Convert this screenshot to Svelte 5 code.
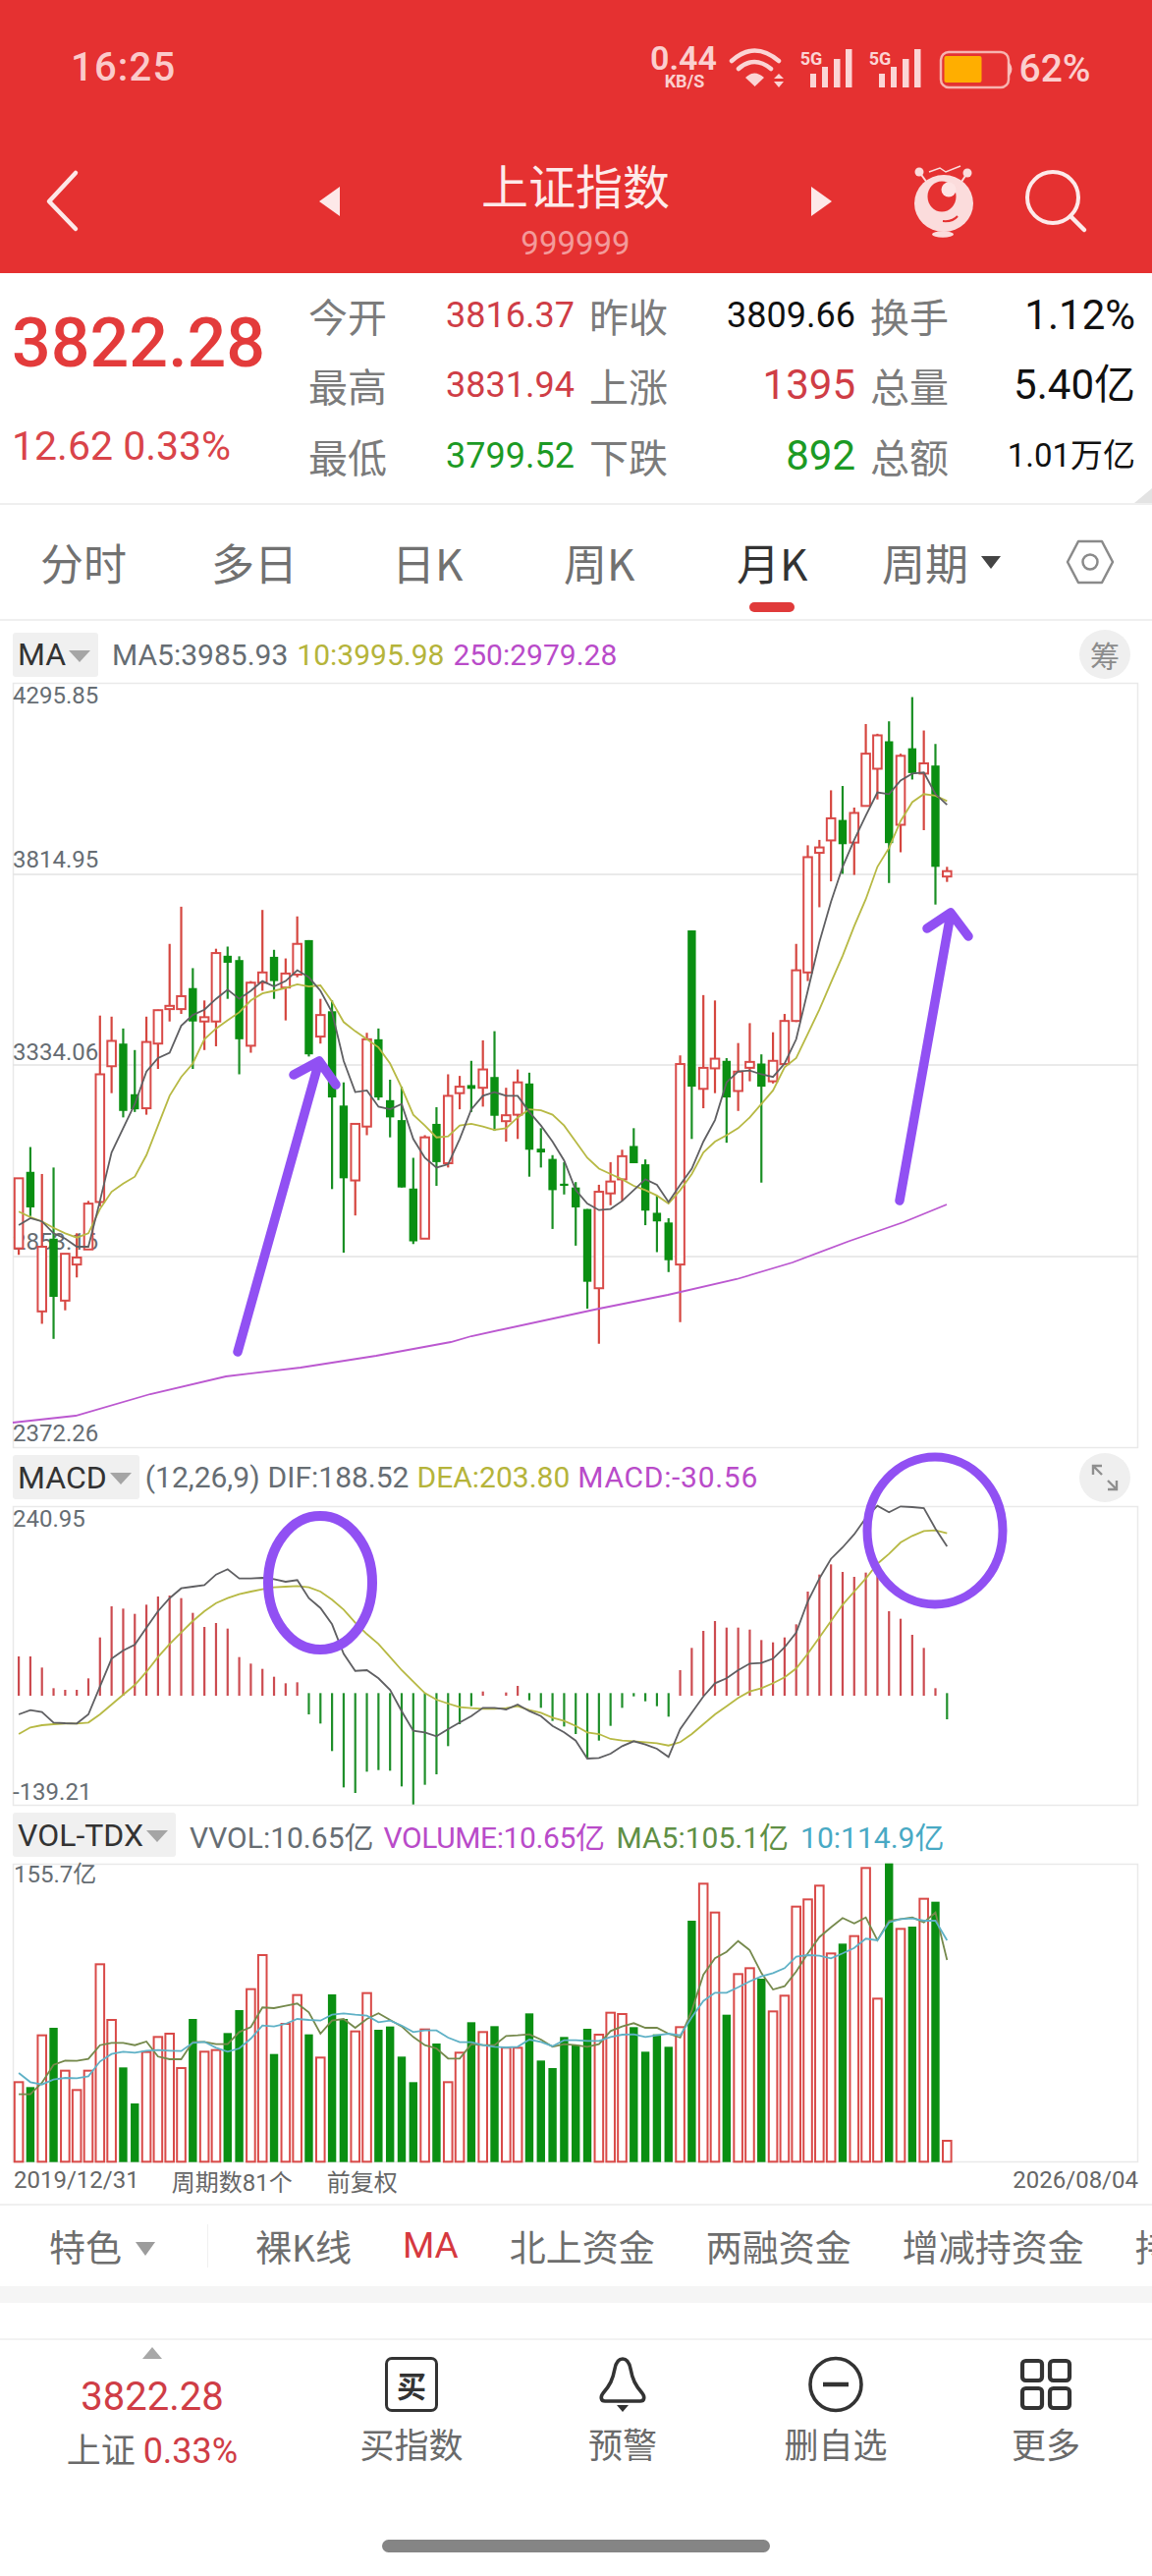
<script>
  const X = (i) => 19.1 + 11.815 * i;
  const PY = (z) => 630 + z * 0.5485;
  const MY = (z) => 1470 + z / 3;
  const VY = (z) => 1840 + z / 3;

  // [up?, high, bodyTop, bodyBottom, low] in reference-sampled units
  const candles = [
    [1,1038,1038,1168,1180],[0,980,1026,1092,1108],[1,1030,1165,1285,1308],[0,1018,1150,1258,1336],[1,1178,1178,1265,1283],
    [1,1140,1185,1198,1222],[1,1080,1085,1170,1170],[1,736,845,1082,1090],[1,738,783,830,880],[0,760,788,913,925],
    [0,800,882,910,915],[1,738,785,908,920],[1,725,726,788,835],[1,603,718,724,747],[1,534,700,724,733],
    [0,648,685,747,835],[1,708,739,747,800],[1,612,620,747,793],[0,608,625,638,705],[0,626,633,780,845],
    [1,672,675,792,805],[1,540,656,675,690],[0,614,627,672,705],[1,630,658,684,745],[1,552,603,660,665],
    [0,596,596,808,812],[1,705,735,775,788],[0,708,728,888,1058],[0,860,903,1038,1176],[1,937,937,1042,1107],
    [1,768,780,942,958],[0,760,780,888,893],[0,855,893,925,962],[0,868,930,1055,1055],[0,1000,1057,1155,1160],
    [1,958,962,1150,1150],[0,906,937,1008,1052],[1,845,885,1010,1018],[1,848,868,880,910],[0,820,865,872,915],
    [1,782,836,870,905],[0,765,850,922,950],[1,870,921,932,970],[1,836,860,920,965],[0,842,862,985,1035],
    [0,945,983,990,1018],[0,995,1002,1060,1132],[0,1008,1048,1052,1068],[0,1045,1055,1092,1163],[0,1095,1095,1230,1280],
    [1,1050,1063,1242,1345],[1,1008,1044,1066,1088],[1,985,997,1040,1080],[0,945,978,1010,1010],[0,1003,1012,1098,1125],
    [0,1070,1102,1118,1175],[0,1112,1120,1190,1212],[1,810,826,1198,1305],[0,578,578,868,965],[1,698,833,872,908],
    [1,708,816,834,880],[0,815,820,888,972],[1,787,840,876,913],[1,750,822,833,858],[0,808,825,868,1046],
    [1,767,820,858,862],[1,733,746,826,826],[1,603,652,746,748],[1,420,442,656,672],[1,410,424,434,535],
    [1,318,370,411,487],[0,310,373,418,473],[1,350,360,415,475],[1,195,250,347,348],[1,213,216,278,335],
    [0,190,227,416,490],[1,250,254,382,433],[0,145,240,286,298],[1,207,268,287,392],[0,232,272,460,530],
    [1,460,468,478,488]
  ];
  const ma5 = [1125,1112,1118,1140,1150,1165,1165,1080,990,945,900,840,815,805,755,735,725,705,688,705,690,672,682,672,652,665,690,730,820,878,875,905,910,900,965,1000,1018,1012,965,910,885,878,885,885,915,940,970,1005,1060,1085,1097,1095,1080,1060,1040,1050,1082,1050,1020,970,930,860,840,838,845,850,825,780,690,600,525,460,410,365,322,325,300,287,285,325,345];
  const ma10 = [1100,1110,1118,1130,1140,1148,1140,1095,1063,1048,1035,995,940,885,850,825,780,760,745,730,708,695,690,685,678,682,680,710,748,765,780,795,825,870,920,940,962,960,940,937,942,948,945,925,910,912,920,940,970,1000,1020,1030,1040,1052,1060,1070,1085,1060,1030,990,970,958,945,925,900,875,832,815,770,725,675,625,570,520,460,425,375,340,325,328,338];
  const ma250 = [[13,1448],[77,1441],[153,1419],[230,1401],[306,1392],[383,1380],[459,1366],[480,1360],[610,1332],[680,1318],[750,1302],[807,1285],[864,1263.5],[920,1244],[964,1226]];

  // MACD: signed bars; tops for red, bottoms for green
  const macdBars = [648,648,682,745,750,750,715,590,495,502,518,490,465,462,470,515,558,546,563,650,670,686,710,730,727,
    -825,-853,-937,-1048,-1065,-1000,-995,-997,-1045,-1100,-1040,-1008,-922,-855,-800,755,0,758,738,-782,-805,-845,-862,-885,-960,-905,-860,-805,-770,-785,-800,-832,
    690,622,570,540,560,560,566,598,605,590,550,450,398,367,390,405,392,395,510,533,582,622,745,-840];
  const dif = [825,812,818,850,852,853,825,740,655,630,612,560,510,470,440,435,430,398,382,410,410,408,412,420,415,470,500,550,640,692,690,715,750,815,875,880,892,870,850,830,805,805,810,795,815,830,860,880,905,960,958,945,922,907,917,930,955,870,820,770,730,715,690,670,668,655,620,575,480,410,350,315,275,225,188,208,190,192,195,258,312];
  const dea = [885,865,858,855,853,853,850,825,795,765,735,695,650,610,575,540,510,485,470,458,450,443,437,435,433,437,450,475,505,545,580,610,650,690,725,760,780,792,803,806,808,808,806,800,812,820,835,845,860,880,885,900,905,907,910,913,920,910,885,855,825,800,775,755,745,730,712,685,640,590,540,490,450,410,365,335,300,280,265,263,272];

  const vols = [[1,838],[0,853],[1,695],[0,672],[1,803],[1,862],[1,803],[1,478],[1,648],[0,793],[0,903],[1,746],[1,700],[1,690],[1,795],[0,645],[1,745],[1,740],[0,688],[0,618],[1,554],[1,450],[0,752],[1,660],[1,572],[0,692],[1,763],[0,570],[0,645],[1,683],[1,566],[0,678],[0,668],[0,760],[0,838],[1,677],[0,720],[1,838],[1,748],[0,655],[1,685],[0,667],[1,733],[1,733],[0,628],[0,772],[0,795],[0,700],[0,725],[0,675],[1,693],[1,626],[1,630],[0,670],[0,745],[0,692],[0,730],[1,670],[0,345],[1,232],[1,320],[0,632],[1,508],[1,490],[0,522],[1,622],[1,574],[1,302],[1,280],[1,238],[1,445],[0,415],[1,392],[1,184],[1,583],[0,170],[1,370],[0,363],[1,278],[0,287],[1,1017]];
  const vma5 = [875,875,840,785,772,773,767,725,718,718,725,714,760,768,768,715,715,722,722,685,670,610,612,605,598,625,690,650,645,672,645,628,648,668,700,725,735,766,766,722,725,725,697,695,692,708,730,722,725,730,722,682,668,658,672,672,690,702,620,510,460,440,407,435,505,555,545,500,445,395,365,337,353,335,405,345,340,335,350,320,465];
  const vma10 = [810,838,845,830,825,826,820,775,752,745,748,742,740,742,743,718,715,733,745,735,705,665,668,660,645,648,650,632,628,632,635,655,650,665,685,680,680,702,716,716,725,730,732,730,708,715,728,710,710,712,712,700,693,692,700,695,690,695,640,590,565,565,548,530,515,505,490,455,450,452,460,445,428,400,405,350,340,338,345,345,405];

  const line = (arr, f) => arr.map((z, i) => `${X(i).toFixed(1)},${f(z).toFixed(1)}`).join(' ');
  const ptsMa5 = line(ma5, PY), ptsMa10 = line(ma10, PY);
  const ptsMa250 = ma250.map((p) => p.join(',')).join(' ');
  const ptsDif = line(dif, MY), ptsDea = line(dea, MY);
  const ptsV5 = line(vma5, VY), ptsV10 = line(vma10, VY);

  const quote = [
    ['今开','3816.37','up','昨收','3809.66','','换手','1.12%','big'],
    ['最高','3831.94','up','上涨','1395','up big','总量','5.40亿','big'],
    ['最低','3799.52','down','下跌','892','down big','总额','1.01万亿','small']
  ];
  const tabs = ['分时','多日','日K','周K','月K'];
  const features = ['裸K线','MA','北上资金','两融资金','增减持资金','持股'];
</script>

<div class="page">
  <header class="head">
    <div class="status">
      <span class="time">16:25</span>
      <svg class="sicons" viewBox="655 40 470 60" width="470" height="60">
        <text x="696" y="71" class="sp1" text-anchor="middle">0.44</text>
        <text x="697" y="89" class="sp2" text-anchor="middle">KB/S</text>
        <g fill="none" stroke="#fbd5d5" stroke-width="4.5" stroke-linecap="round">
          <path d="M745 62 Q768 41 793 62" />
          <path d="M752 70 Q768 56 785 70" />
        </g>
        <path d="M759 79 Q768 70 778 79 L768.6 88 Z" fill="#fbd5d5" />
        <path d="M793 75 l5 5 h-10 Z M793 89 l5 -6 h-10 Z" fill="#fbd5d5" />
        <text x="826" y="66" class="sg" text-anchor="middle">5G</text>
        <g fill="#fbd5d5">
          <rect x="825" y="75" width="6" height="14" /><rect x="837" y="68" width="6" height="21" /><rect x="849" y="60" width="6.5" height="29" /><rect x="861" y="50" width="6.5" height="39" />
        </g>
        <text x="896" y="66" class="sg" text-anchor="middle">5G</text>
        <g fill="#fbd5d5">
          <rect x="895" y="75" width="6" height="14" /><rect x="907" y="68" width="6" height="21" /><rect x="919" y="60" width="6.5" height="29" /><rect x="931" y="50" width="6.5" height="39" />
        </g>
        <rect x="958" y="53" width="69" height="36" rx="8" fill="none" stroke="#f7b4b0" stroke-width="2.5" />
        <rect x="961.5" y="57" width="38" height="27" rx="2" fill="#ffae00" />
        <path d="M1027.5 65 q4 5 0 11 Z" fill="#f7c0bc" stroke="#f7c0bc" stroke-width="2" />
        <text x="1074" y="83" class="sp3" text-anchor="middle">62%</text>
      </svg>
    </div>
    <nav class="bar">
      <svg class="back" viewBox="0 0 40 70" width="40" height="70"><path d="M31 6 L4 35 L31 63" fill="none" stroke="#fde8e8" stroke-width="4.5" stroke-linecap="round" stroke-linejoin="round"/></svg>
      <svg class="tri t1" viewBox="0 0 21 30" width="21" height="30"><path d="M21 0 V30 L0 15 Z" fill="#fde8e8" /></svg>
      <div class="title">
        <strong>上证指数</strong>
        <span>999999</span>
      </div>
      <svg class="tri" viewBox="0 0 21 30" width="21" height="30"><path d="M0 0 V30 L21 15 Z" fill="#fde8e8" /></svg>
      <svg class="logo" viewBox="925 165 68 80" width="68" height="80">
        <g stroke="#fbdcdc" stroke-width="2" fill="none">
          <path d="M934 175 L942 186 M983 176 L977 185" />
          <path d="M944 175 L955 171 L961 175 L976 169" stroke-width="1.5" />
        </g>
        <circle cx="934" cy="175" r="4.5" fill="#fbdcdc" /><circle cx="983" cy="176" r="4.5" fill="#fbdcdc" />
        <ellipse cx="959" cy="207" rx="30" ry="29" fill="#fbdcdc" />
        <ellipse cx="957" cy="200" rx="14.5" ry="15.5" fill="#e53131" />
        <circle cx="964" cy="193" r="7.5" fill="#fde4e4" />
        <path d="M958 225 q10 1 15 -5" fill="none" stroke="#e53131" stroke-width="2" />
        <ellipse cx="958" cy="238.5" rx="11" ry="3.2" fill="#fbdcdc" />
      </svg>
      <svg class="search" viewBox="1038 170 70 70" width="70" height="70"><circle cx="1070" cy="201" r="26" fill="none" stroke="#fdeaea" stroke-width="4" /><path d="M1088 220 L1102 234" stroke="#fdeaea" stroke-width="4.5" stroke-linecap="round" /></svg>
    </nav>
  </header>

  <section class="quote">
    <div class="last">
      <div class="price">3822.28</div>
      <div class="chg">12.62 0.33%</div>
    </div>
    <div class="qgrid">
      {#each quote as r}
        <span class="ql">{r[0]}</span><span class="qv {r[2]}">{r[1]}</span>
        <span class="ql">{r[3]}</span><span class="qv {r[5]}">{r[4]}</span>
        <span class="ql">{r[6]}</span><span class="qv {r[8]}">{r[7]}</span>
      {/each}
    </div>
    <i class="corner"></i>
  </section>

  <div class="tabs">
    {#each tabs as t, i}
      <div class="tab" class:on={i === 4}>{t}{#if i === 4}<i></i>{/if}</div>
    {/each}
    <div class="tab">周期<b class="caret"></b></div>
    <svg class="hex" viewBox="0 0 50 46" width="50" height="46"><path d="M13 2 H37 L48 23 L37 44 H13 L2 23 Z" fill="none" stroke="#8a8a8a" stroke-width="2.5" stroke-linejoin="round"/><circle cx="25" cy="23" r="7.5" fill="none" stroke="#8a8a8a" stroke-width="2.5"/></svg>
  </div>

  <div class="ihead h1">
    <div class="chip">MA<b></b></div>
    <span class="grey">MA5:3985.93</span><span class="olive">10:3995.98</span><span class="purple">250:2979.28</span>
    <div class="round">筹</div>
  </div>
  <svg class="chart c1" viewBox="0 695 1173 779" width="1173" height="779">
    <rect x="13.5" y="695.5" width="1145" height="778" class="frame" />
    <path d="M13 890 H1159 M13 1084 H1159 M13 1279 H1159" class="grid" />
    <text x="13" y="716" class="ax">4295.85</text>
    <text x="13" y="883" class="ax">3814.95</text>
    <text x="13" y="1079" class="ax">3334.06</text>
    <text x="13" y="1272" class="ax">2853.16</text>
    <text x="13" y="1467" class="ax">2372.26</text>
    {#each candles as c, i}
      {@const x = X(i)}
      <line x1={x} x2={x} y1={PY(c[1])} y2={PY(c[4])} class={c[0] ? 'wr' : 'wg'} />
      {#if c[0]}
        <rect x={x - 4.3} y={PY(c[2])} width="8.6" height={Math.max(PY(c[3]) - PY(c[2]), 2)} class="br" />
      {:else}
        <rect x={x - 4.2} y={PY(c[2])} width="8.4" height={Math.max(PY(c[3]) - PY(c[2]), 2)} class="bg" />
      {/if}
    {/each}
    <polyline points={ptsMa250} class="l lp" />
    <polyline points={ptsMa10} class="l lo" />
    <polyline points={ptsMa5} class="l ld" />
  </svg>

  <div class="ihead h2">
    <div class="chip">MACD<b></b></div>
    <span class="grey">(12,26,9)</span><span class="grey">DIF:188.52</span><span class="olive">DEA:203.80</span><span class="purple">MACD:-30.56</span>
    <div class="round">
      <svg viewBox="0 0 30 30" width="30" height="30"><path d="M3 12 V3 H12 M3 3 L12 12 M27 18 V27 H18 M27 27 L18 18" fill="none" stroke="#8f8f8f" stroke-width="2.4"/></svg>
    </div>
  </div>
  <svg class="chart c2" viewBox="0 1533 1173 305" width="1173" height="305">
    <rect x="13.5" y="1533.5" width="1145" height="304" class="frame" />
    <text x="13" y="1554" class="ax">240.95</text>
    <text x="13" y="1832" class="ax">-139.21</text>
    {#each macdBars as v, i}
      {#if v > 0}
        <line x1={X(i)} x2={X(i)} y1={MY(v)} y2={MY(768)} class="hr" />
      {:else if v < 0}
        <line x1={X(i)} x2={X(i)} y1={MY(760)} y2={MY(-v)} class="hg" />
      {/if}
    {/each}
    <polyline points={ptsDea} class="l lo" />
    <polyline points={ptsDif} class="l ld" />
  </svg>

  <div class="ihead h3">
    <div class="chip">VOL-TDX<b></b></div>
    <span class="grey">VVOL:10.65亿</span><span class="purple">VOLUME:10.65亿</span><span class="mgreen">MA5:105.1亿</span><span class="cyan">10:114.9亿</span>
  </div>
  <svg class="chart c3" viewBox="0 1897 1173 304" width="1173" height="304">
    <rect x="13.5" y="1897.5" width="1145" height="303" class="frame" />
    <text x="14" y="1916" class="ax">155.7亿</text>
    {#each vols as v, i}
      {#if v[0]}
        <rect x={X(i) - 4.3} y={VY(v[1])} width="8.6" height={VY(1081) - VY(v[1])} class="br" />
      {:else}
        <rect x={X(i) - 4.2} y={VY(v[1])} width="8.4" height={VY(1082) - VY(v[1])} class="bg" />
      {/if}
    {/each}
    <polyline points={ptsV5} class="l lv5" />
    <polyline points={ptsV10} class="l lv10" />
  </svg>
  <div class="foot">
    <span>2019/12/31</span><span class="f2">周期数81个</span><span class="f3">前复权</span><span class="f4">2026/08/04</span>
  </div>

  <div class="features">
    <span class="fsel">特色<b></b></span>
    <i class="sep"></i>
    {#each features as f}
      <span class:act={f === 'MA'}>{f}</span>
    {/each}
  </div>
  <div class="band"></div>

  <div class="bottom">
    <div class="cell idx">
      <i class="uptri"></i>
      <div class="bp">3822.28</div>
      <div class="bn">上证 <em>0.33%</em></div>
    </div>
    <div class="cell">
      <div class="ico"><div class="buy">买</div></div>
      <span>买指数</span>
    </div>
    <div class="cell">
      <div class="ico">
        <svg viewBox="0 0 50 58" width="50" height="58"><path d="M25 3 C20 3 18 8 17 13 C15 24 12 30 5 38 C2 42 3 46 7 46 H43 C47 46 48 42 45 38 C38 30 35 24 33 13 C32 8 30 3 25 3 Z" fill="none" stroke="#333" stroke-width="3.6" stroke-linejoin="round"/><path d="M19 50 H31 L25 57 Z" fill="#333"/></svg>
      </div>
      <span>预警</span>
    </div>
    <div class="cell">
      <div class="ico">
        <svg viewBox="0 0 58 58" width="58" height="58"><ellipse cx="29" cy="29" rx="26" ry="26.5" fill="none" stroke="#333" stroke-width="3.6"/><path d="M16 29 H42" stroke="#333" stroke-width="4.5"/></svg>
      </div>
      <span>删自选</span>
    </div>
    <div class="cell">
      <div class="ico">
        <svg viewBox="0 0 54 54" width="54" height="54"><g fill="none" stroke="#333" stroke-width="4.2"><rect x="3" y="3" width="20" height="20" rx="3.5"/><rect x="31" y="3" width="20" height="20" rx="3.5"/><rect x="3" y="31" width="20" height="20" rx="3.5"/><rect x="31" y="31" width="20" height="20" rx="3.5"/></g></svg>
      </div>
      <span>更多</span>
    </div>
  </div>
  <div class="homebar"><i></i></div>

  <svg class="marks" viewBox="0 0 1173 2622" width="1173" height="2622">
    <g fill="none" stroke="#9150f3" stroke-linecap="round" stroke-linejoin="round">
      <path d="M242 1376 L325 1080 M299 1094 L325 1080 L342 1104" stroke-width="9.5" />
      <path d="M916 1222 L968 930 M944 945 L968 929 L986 953" stroke-width="9.5" />
      <ellipse cx="326" cy="1611" rx="53" ry="68" stroke-width="10" />
      <ellipse cx="952" cy="1558" rx="69" ry="75" stroke-width="9" />
    </g>
  </svg>
</div>

<style>
  :global(body) { margin: 0; background: #fff; }
  .page { position: relative; width: 1173px; height: 2622px; overflow: hidden; background: #fff; font-family: Roboto, "Noto Sans CJK SC", sans-serif; }

  .head { height: 278px; background: #e53131; color: #fde8e8; }
  .status { height: 100px; display: flex; align-items: flex-start; justify-content: space-between; }
  .time { margin: 44px 0 0 72px; font-size: 40px; line-height: 50px; font-weight: 500; color: #fbcaca; letter-spacing: 1.2px; }
  .sicons { margin: 40px 48px 0 0; }
  .sp1 { font: 600 34px Roboto, sans-serif; fill: #fbcfcf; }
  .sp2 { font: 700 18px Roboto, sans-serif; fill: #fbcfcf; }
  .sg { font: 700 18px Roboto, sans-serif; fill: #fbd5d5; }
  .sp3 { font: 500 39px Roboto, sans-serif; fill: #fbcfcf; }
  .bar { height: 178px; box-sizing: border-box; padding-top: 32px; display: flex; align-items: center; }
  .back { margin-left: 46px; flex: none; }
  .tri { flex: none; }
  .t1 { margin-left: 239px; }
  .title { width: 480px; flex: none; display: flex; flex-direction: column; align-items: center; margin-top: 14px; }
  .title strong { font: 400 48px/58px "Noto Sans CJK SC", sans-serif; color: #fdeaea; }
  .title span { font-size: 33px; line-height: 36px; color: #f39a9a; margin-top: 14px; }
  .logo { margin-left: 80px; flex: none; }
  .search { margin-left: 45px; flex: none; }

  .quote { position: relative; height: 234px; border-bottom: 2px solid #efefef; display: flex; }
  .last { width: 314px; flex: none; padding-left: 12px; box-sizing: border-box; }
  .price { margin-top: 30px; font-size: 70px; line-height: 82px; font-weight: 500; color: #e33b3b; }
  .chg { margin-top: 42px; font-size: 41px; line-height: 44px; color: #d9444a; white-space: nowrap; }
  .qgrid { padding-top: 7px; display: grid; grid-template-columns: 82px 174px 84px 172px 83px 172px; column-gap: 15px; grid-auto-rows: 71.5px; align-items: center; }
  .ql { font: 400 40px/50px "Noto Sans CJK SC", sans-serif; color: #7b7b7b; }
  .qv { text-align: right; font-size: 36px; line-height: 50px; color: #111; white-space: nowrap; }
  .qv.up { color: #cf3d46; }
  .qv.down { color: #1c9a24; }
  .qv.big { font-size: 42px; }
  .qv.small { font-size: 33px; }
  .corner { position: absolute; right: 0; bottom: 0; width: 0; height: 0; border-left: 18px solid transparent; border-bottom: 15px solid #e3e3e3; }

  .tabs { height: 118px; box-sizing: border-box; border-bottom: 2px solid #efefef; padding-left: 41px; display: grid; grid-template-columns: 174px 184px 175px 176px 148px 187px 60px; align-items: center; font: 400 44px/56px "Noto Sans CJK SC", sans-serif; color: #717171; }
  .tab { position: relative; white-space: nowrap; display: flex; align-items: center; }
  .tab.on { color: #333; }
  .tab i { position: absolute; left: 13px; top: 69px; width: 46px; height: 10px; border-radius: 5px; background: #e03a3a; }
  .caret { margin-left: 13px; width: 0; height: 0; border-left: 10.5px solid transparent; border-right: 10.5px solid transparent; border-top: 13px solid #444; }

  .ihead { position: relative; display: flex; align-items: center; padding-left: 13px; box-sizing: border-box; font-size: 30px; white-space: nowrap; }
  .h1 { height: 63px; padding-top: 5px; }
  .h2 { height: 59px; }
  .h3 { height: 59px; }
  .ihead span { margin-left: 12px; }
  .ihead .chip + span { margin-left: 14px; }
  .h1 span { margin-left: 9px; }
  .h2 span { margin-left: 8px; }
  .h2 .chip + span { margin-left: 6px; }
  .h2 .purple { letter-spacing: 0.7px; }
  .h3 .purple { letter-spacing: -0.4px; margin-left: 10px; }
  .chip { height: 45px; display: flex; align-items: center; padding: 0 8px 0 5px; background: #f0f0f0; border-radius: 3px; color: #333; font-size: 32px; }
  .chip b { margin: 3px 0 0 3px; width: 0; height: 0; border-left: 11px solid transparent; border-right: 11px solid transparent; border-top: 12px solid #a5a5a5; }
  .grey { color: #666d73; }
  .olive { color: #b5b43a; }
  .purple { color: #b94bc9; }
  .mgreen { color: #5f8f45; }
  .cyan { color: #48a9c4; }
  .round { position: absolute; left: 1099px; top: 5px; width: 52px; height: 50px; border-radius: 50%; background: #efefef; display: flex; align-items: center; justify-content: center; font: 400 30px "Noto Sans CJK SC", sans-serif; color: #8c8c8c; }
  .h1 .round { top: 9px; }

  .chart { display: block; overflow: visible; }
  .frame { fill: #fff; stroke: #e9e9e9; stroke-width: 1.5; }
  .grid { stroke: #e4e4e4; stroke-width: 1.5; fill: none; }
  .ax { font: 400 24px Roboto, "Noto Sans CJK SC", sans-serif; fill: #666d73; }
  .wr { stroke: #d5463f; stroke-width: 2.2; }
  .wg { stroke: #1a8f24; stroke-width: 2.2; }
  .br { fill: #fff; stroke: #d94a48; stroke-width: 2; }
  .bg { fill: #0a8f12; }
  .hr { stroke: #cc4b50; stroke-width: 2.2; }
  .hg { stroke: #1f8f2a; stroke-width: 2.2; }
  .l { fill: none; stroke-width: 1.8; }
  .ld { stroke: #5f5f62; }
  .lo { stroke: #b7b944; }
  .lp { stroke: #bb58d0; }
  .lv5 { stroke: #75894c; }
  .lv10 { stroke: #5fb1c6; }

  .foot { height: 42px; box-sizing: border-box; padding: 0 14px 6px; display: flex; align-items: center; font: 400 24px Roboto, "Noto Sans CJK SC", sans-serif; color: #666; }
  .f2 { margin-left: 33px; }
  .f3 { margin-left: 35px; }
  .f4 { margin-left: auto; }

  .features { height: 84px; border-top: 2px solid #f0f0f0; box-sizing: border-box; display: flex; align-items: center; padding-left: 50px; gap: 52px; white-space: nowrap; overflow: hidden; font: 400 37px/46px "Noto Sans CJK SC", sans-serif; color: #6e6e6e; }
  .fsel { display: flex; align-items: center; flex: none; width: 107px; }
  .fsel b { margin: 6px 0 0 14px; width: 0; height: 0; border-left: 10.5px solid transparent; border-right: 10.5px solid transparent; border-top: 14px solid #9c9c9c; }
  .sep { flex: none; width: 1px; height: 44px; background: #f0f0f0; margin: 0 -4px 0 2px; }
  .act { color: #d6393f; font-family: Roboto, sans-serif; }
  .band { height: 17px; background: #f5f5f5; }

  .bottom { margin-top: 36px; height: 166px; border-top: 2px solid #f2f2f2; box-sizing: border-box; display: grid; grid-template-columns: 310px 218px 212px 222px 206px; font: 400 35px/44px "Noto Sans CJK SC", sans-serif; color: #6a6a6a; }
  .cell { display: flex; flex-direction: column; align-items: center; white-space: nowrap; }
  .cell span { margin-top: 3px; }
  .ico { height: 70px; margin-top: 10px; display: flex; align-items: center; justify-content: center; }
  .buy { width: 48px; height: 50px; border: 3.6px solid #333; border-radius: 7px; display: flex; align-items: center; justify-content: center; font: 700 30px "Noto Sans CJK SC", sans-serif; color: #333; }
  .uptri { margin-top: 7px; width: 0; height: 0; border-left: 10px solid transparent; border-right: 10px solid transparent; border-bottom: 12px solid #a8a8a8; }
  .bp { margin-top: 15px; font: 400 40px/48px Roboto, sans-serif; color: #cf3d46; }
  .bn { margin-top: 5px; font-size: 35px; line-height: 46px; }
  .bn em { font: 400 36px Roboto, sans-serif; color: #cf3d46; }
  .homebar { height: 76px; display: flex; justify-content: center; }
  .homebar i { margin-top: 39px; width: 395px; height: 13px; border-radius: 7px; background: #858585; }

  .marks { position: absolute; left: 0; top: 0; pointer-events: none; }
</style>
